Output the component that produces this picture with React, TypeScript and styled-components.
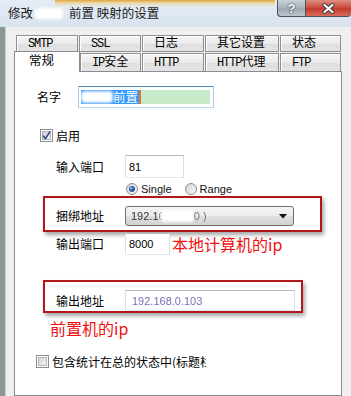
import React from "react"
import styled, { createGlobalStyle, css } from "styled-components"

const GlobalStyle = createGlobalStyle`
  html, body {
    margin: 0;
    padding: 0;
  }
  body {
    width: 351px;
    height: 396px;
    overflow: hidden;
    background: #f0f0f0;
    font-family: "Noto Sans CJK SC", "Noto Sans", sans-serif;
    font-size: 12px;
    color: #000;
  }
`

const Window = styled.div`
  width: 351px;
  height: 396px;
  display: flex;
  flex-direction: column;
`

const TitleBar = styled.div`
  height: 27px;
  flex: none;
  display: flex;
  align-items: flex-start;
  background:
    linear-gradient(180deg, rgba(222, 160, 50, 0.95) 0, rgba(238, 205, 120, 0.6) 3px, rgba(220, 230, 240, 0) 7px) 55px 0 / 220px 7px no-repeat,
    linear-gradient(180deg, #e4ecf5 0, #d8e3ef 100%);
`

const Title = styled.div`
  display: flex;
  align-items: center;
  padding: 4px 0 0 8px;
  font-size: 12.5px;
  line-height: 18px;
  color: #1a1a1a;
  white-space: nowrap;
`

const Smudge = styled.span<{ $w: number; $h: number }>`
  display: inline-block;
  width: ${p => p.$w}px;
  height: ${p => p.$h}px;
  background: #fff;
  border-radius: 4px;
  filter: blur(1.5px);
`

const CaptionButtons = styled.div`
  margin-left: auto;
  display: flex;
`

const CaptionButton = styled.div<{ $close?: boolean }>`
  box-sizing: border-box;
  width: ${p => (p.$close ? 46 : 28)}px;
  height: 17px;
  border: 1px solid #4a535c;
  border-top: none;
  display: flex;
  align-items: center;
  justify-content: center;
  font: bold 13px "Liberation Sans", sans-serif;
  color: #fff;
  text-shadow: 0 0 1px #333, 0 0 2px #333;
  ${p =>
    p.$close
      ? css`
          border-right: none;
          border-radius: 0 0 4px 0;
          background: linear-gradient(180deg, #dc8e82 0, #cb4f41 45%, #c23b2d 55%, #d66a5c 100%);
        `
      : css`
          border-right: none;
          border-radius: 0 0 0 4px;
          background: linear-gradient(180deg, #c9d0d7 0, #adb6bf 45%, #9ea8b2 55%, #bcc5ce 100%);
        `}
`

const Frame = styled.div`
  flex: 1;
  min-height: 0;
  display: flex;
`

const FrameEdge = styled.div`
  width: 7px;
  flex: none;
  background: linear-gradient(90deg, #8d9792 0 5px, #c8d2da 5px 6px, #e6ebef 6px 7px);
`

const Client = styled.div`
  flex: 1;
  display: flex;
  flex-direction: column;
  padding: 8px 9px 0 7px;
  background: #f0f0f0;
`

const TabRow = styled.div<{ $front?: boolean }>`
  display: flex;
  align-items: flex-start;
  height: ${p => (p.$front ? 18 : 17)}px;
  margin-top: ${p => (p.$front ? 1 : 0)}px;
  padding-left: ${p => (p.$front ? 0 : 2)}px;
`

const Tab = styled.div<{ $w: number; $front?: boolean; $selected?: boolean }>`
  box-sizing: border-box;
  width: ${p => p.$w - 1}px;
  height: ${p => (p.$front ? 18 : 17)}px;
  margin-right: 1px;
  padding-left: 11px;
  border: 1px solid #8d9095;
  ${p => p.$front && "border-bottom: none;"}
  background: linear-gradient(180deg, #f5f5f5 0, #ebebeb 50%, #dedede 51%, #e4e4e4 100%);
  box-shadow: inset 1px 1px 0 #fdfdfd;
  display: flex;
  align-items: center;
  font-family: "Liberation Mono", "Noto Sans CJK SC", monospace;
  font-size: 12px;
  line-height: 14px;
  white-space: nowrap;
  ${p =>
    p.$selected &&
    css`
      position: relative;
      z-index: 1;
      width: ${p.$w}px;
      height: 21px;
      margin-top: -2px;
      margin-right: 0;
      padding-left: 14px;
      background: #fff;
      box-shadow: none;
      border-color: #898c95;
      font-size: 12.5px;
    `}
`

const Latin = styled.span`
  letter-spacing: -1.1px;
`

const Panel = styled.div`
  flex: 1;
  box-sizing: border-box;
  border: 1px solid #898c95;
  background: #fff;
  display: flex;
  flex-direction: column;
`

const Row = styled.div<{ $top: number; $left: number }>`
  display: flex;
  align-items: center;
  margin-top: ${p => p.$top}px;
  padding-left: ${p => p.$left}px;
`

const FieldLabel = styled.span<{ $w: number }>`
  width: ${p => p.$w}px;
  flex: none;
  font-size: 12px;
  line-height: 16px;
`

const TextBox = styled.div<{ $w: number; $h: number; $focus?: boolean }>`
  box-sizing: border-box;
  width: ${p => p.$w}px;
  height: ${p => p.$h}px;
  flex: none;
  border: 1px solid;
  border-color: #b7b9c0 #dcdfe5 #e3e9ef #dcdfe5;
  ${p => p.$focus && "border-color: #4d8cc5 #a9cbe6 #b9d6ee #a9cbe6;"}
  background: #fff;
  display: flex;
  align-items: center;
  padding-left: 3px;
  font: 11px "Liberation Sans", sans-serif;
  color: #000;
  overflow: hidden;
  white-space: nowrap;
`

const Selection = styled.span`
  display: inline-flex;
  align-items: center;
  height: 14px;
  padding-right: 1px;
  background: #3399ff;
  color: #fff;
  font-family: "Noto Sans CJK SC", sans-serif;
  font-size: 12.5px;
  line-height: 14px;
`

const Caret = styled.span`
  width: 2px;
  height: 14px;
  background: #e0762a;
  flex: none;
`

const Highlight = styled.span`
  flex: none;
  width: 69px;
  height: 14px;
  background: #c8ecca;
`

const BlurText = styled.span<{ $color: string }>`
  color: ${p => p.$color};
  filter: blur(0.6px);
`

const CheckLabel = styled.span<{ $clip?: number }>`
  margin-left: 3px;
  font-size: 12px;
  line-height: 13px;
  white-space: nowrap;
  ${p => p.$clip && `width: ${p.$clip}px; overflow: hidden;`}
`

const RadioLabel = styled.span`
  margin: 0 13px 0 3px;
  font: 11px "Liberation Sans", sans-serif;
  line-height: 12px;
  color: #111;
`

const Callout = styled.div<{ $w: number; $top: number; $pad: string }>`
  box-sizing: border-box;
  width: ${p => p.$w}px;
  margin: ${p => p.$top}px 0 0 28px;
  padding: ${p => p.$pad};
  border: 2px solid #b3151b;
  box-shadow: 2px 3px 4px rgba(0, 0, 0, 0.35);
  display: flex;
  align-items: center;
`

const Select = styled.div`
  box-sizing: border-box;
  width: 169px;
  height: 20px;
  flex: none;
  border: 1px solid #707070;
  border-radius: 3px;
  background: linear-gradient(180deg, #f4f4f4 0, #ececec 48%, #dfdfdf 52%, #d2d2d2 100%);
  display: flex;
  align-items: center;
  padding: 0 6px 0 5px;
  font: 11px "Liberation Sans", sans-serif;
  overflow: hidden;
`

const SelectArrow = styled.svg`
  margin-left: auto;
  flex: none;
`

const Note = styled.span<{ $left?: number }>`
  margin-left: ${p => p.$left ?? 0}px;
  color: #f01010;
  font-size: 16px;
  line-height: 18px;
  white-space: nowrap;
`

const NoteLine = styled.div`
  margin: 6px 0 0 35px;
  display: flex;
`

const CheckBox = ({ checked, id }: { checked?: boolean; id: string }) => (
  <svg width="13" height="13" viewBox="0 0 13 13" style={{ flex: "none" }}>
    <defs>
      <linearGradient id={id} x1="0" y1="0" x2="1" y2="1">
        <stop offset="0" stopColor="#cfd2d6" />
        <stop offset="1" stopColor="#f7f7f7" />
      </linearGradient>
    </defs>
    <rect x="0.5" y="0.5" width="12" height="12" fill="#fff" stroke="#8e8f8f" />
    <rect x="2.5" y="2.5" width="8" height="8" fill={`url(#${id})`} stroke="#b4b7bb" />
    {checked && (
      <path d="M3 6.6 L5.4 9.6 L10.2 2.6" fill="none" stroke="#42508f" strokeWidth="1.7" />
    )}
  </svg>
)

const Radio = ({ checked, id }: { checked?: boolean; id: string }) => (
  <svg width="12" height="12" viewBox="0 0 12 12" style={{ flex: "none" }}>
    <defs>
      <linearGradient id={id} x1="0" y1="0" x2="1" y2="1">
        <stop offset="0" stopColor="#d0d3d7" />
        <stop offset="1" stopColor="#fafafa" />
      </linearGradient>
    </defs>
    <circle cx="6" cy="6" r="5.5" fill={`url(#${id})`} stroke="#8e8f8f" />
    {checked && (
      <>
        <circle cx="6" cy="6" r="3" fill="#2e5c9e" />
        <circle cx="5.2" cy="5.2" r="1.2" fill="#8fb6e6" />
      </>
    )}
  </svg>
)

const backTabs: [React.ReactNode, number][] = [
  [<Latin>SMTP</Latin>, 63],
  [<Latin>SSL</Latin>, 63],
  ["日志", 63],
  ["其它设置", 75],
  ["状态", 62],
]

const frontTabs: [React.ReactNode, number][] = [
  [<><Latin>IP</Latin>安全</>, 62],
  [<Latin>HTTP</Latin>, 63],
  [<><Latin>HTTP</Latin>代理</>, 75],
  [<Latin>FTP</Latin>, 62],
]

export default function App() {
  return (
    <>
      <GlobalStyle />
      <Window>
        <TitleBar>
          <Title>
            修改
            <Smudge $w={28} $h={11} style={{ margin: "0 6px 0 2px" }} />
            前置 映射的设置
          </Title>
          <CaptionButtons>
            <CaptionButton>?</CaptionButton>
            <CaptionButton $close>
              <svg width="15" height="11" viewBox="0 0 15 11">
                <path d="M3.5 2 L11.5 9 M11.5 2 L3.5 9" stroke="#3a3a3a" strokeWidth="4" strokeLinecap="round" />
                <path d="M3.5 2 L11.5 9 M11.5 2 L3.5 9" stroke="#fff" strokeWidth="2.2" strokeLinecap="round" />
              </svg>
            </CaptionButton>
          </CaptionButtons>
        </TitleBar>
        <Frame>
          <FrameEdge />
          <Client>
            <TabRow>
              {backTabs.map(([label, w], i) => (
                <Tab key={i} $w={w}>{label}</Tab>
              ))}
            </TabRow>
            <TabRow $front>
              <Tab $w={66} $front $selected>常规</Tab>
              {frontTabs.map(([label, w], i) => (
                <Tab key={i} $w={w} $front>{label}</Tab>
              ))}
            </TabRow>
            <Panel>
              <Row $top={14} $left={22}>
                <FieldLabel $w={41}>名字</FieldLabel>
                <TextBox $w={136} $h={22} $focus style={{ paddingLeft: 2 }}>
                  <Selection>
                    <Smudge $w={32} $h={12} />
                    前置
                  </Selection>
                  <Caret />
                  <Highlight />
                </TextBox>
              </Row>
              <Row $top={21} $left={25}>
                <CheckBox checked id="cb1" />
                <CheckLabel>启用</CheckLabel>
              </Row>
              <Row $top={13} $left={41}>
                <FieldLabel $w={69}>输入端口</FieldLabel>
                <TextBox $w={59} $h={23}>81</TextBox>
              </Row>
              <Row $top={5} $left={111}>
                <Radio checked id="rb1" />
                <RadioLabel>Single</RadioLabel>
                <Radio id="rb2" />
                <RadioLabel>Range</RadioLabel>
              </Row>
              <Callout $w={279} $top={1} $pad="8px 0 4px 11px">
                <FieldLabel $w={69}>捆绑地址</FieldLabel>
                <Select>
                  <BlurText $color="#333">192.168.</BlurText>
                  <Smudge $w={34} $h={12} style={{ marginLeft: -14 }} />
                  <BlurText $color="#777">0 )</BlurText>
                  <SelectArrow width="8" height="5" viewBox="0 0 8 5">
                    <path d="M0 0 H8 L4 4.5 Z" fill="#111" />
                  </SelectArrow>
                </Select>
              </Callout>
              <Row $top={1} $left={41}>
                <FieldLabel $w={69}>输出端口</FieldLabel>
                <TextBox $w={45} $h={22}>8000</TextBox>
                <Note $left={2}>本地计算机的ip</Note>
              </Row>
              <Callout $w={260} $top={25} $pad="8px 0 0 11px">
                <FieldLabel $w={69}>输出地址</FieldLabel>
                <TextBox $w={170} $h={21} style={{ paddingLeft: 6 }}>
                  <BlurText $color="#7a6fb8">192.168.0.103</BlurText>
                </TextBox>
              </Callout>
              <NoteLine>
                <Note>前置机的ip</Note>
              </NoteLine>
              <Row $top={18} $left={21}>
                <CheckBox id="cb2" />
                <CheckLabel $clip={154}>包含统计在总的状态中(标题栏</CheckLabel>
              </Row>
            </Panel>
          </Client>
        </Frame>
      </Window>
    </>
  )
}
